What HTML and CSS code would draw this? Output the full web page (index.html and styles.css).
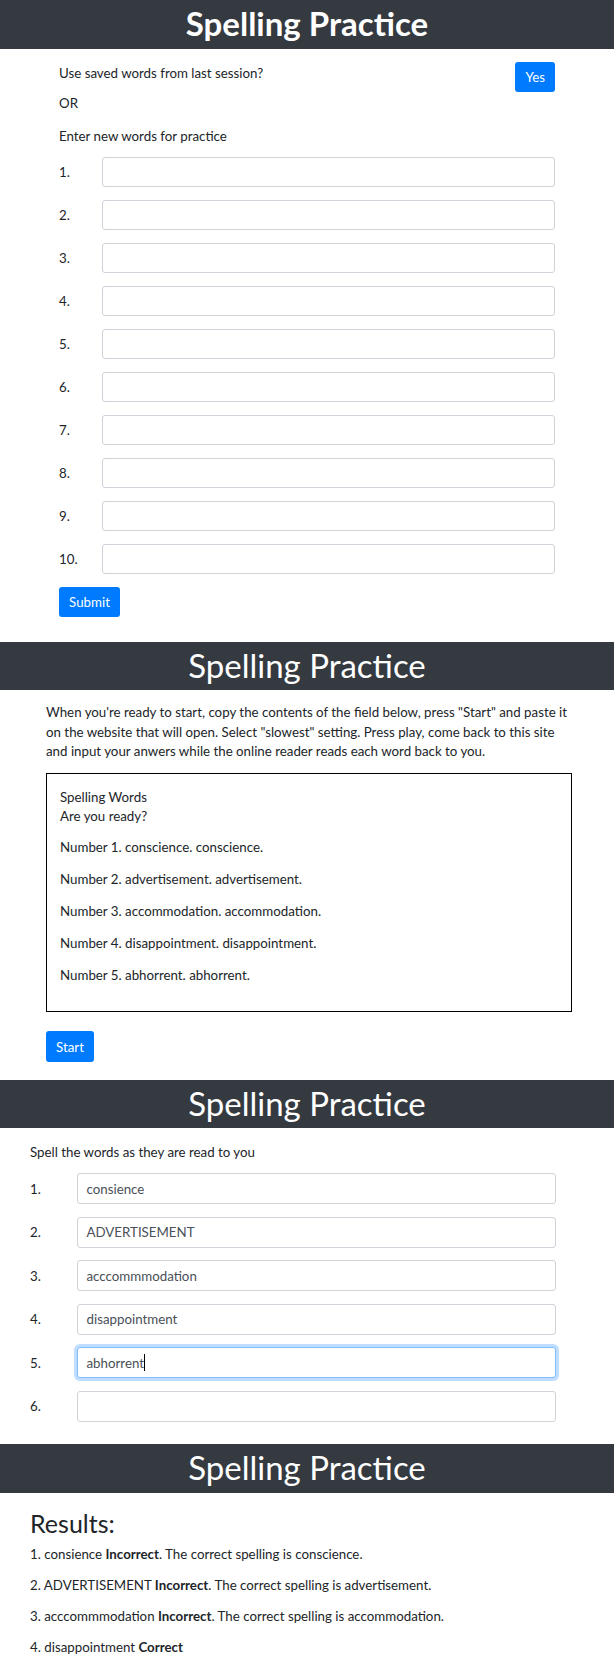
FILE: index.html
```html
<!DOCTYPE html>
<html lang="en">
<head>
<meta charset="utf-8">
<title>Spelling Practice</title>
<link rel="stylesheet" href="styles.css">
</head>
<body>
<section class="screen screen-setup">
  <header class="bar"><h1 class="bar-title bar-title-bold">Spelling Practice</h1></header>
  <div class="setup-body">
    <div class="saved-row">
      <span class="saved-text">Use saved words from last session?</span>
      <button class="btn">Yes</button>
    </div>
    <p class="setup-line">OR</p>
    <p class="setup-line setup-line-last">Enter new words for practice</p>
    <div class="word-list">
      <div class="word-row"><span class="word-num">1.</span><div class="field"></div></div>
      <div class="word-row"><span class="word-num">2.</span><div class="field"></div></div>
      <div class="word-row"><span class="word-num">3.</span><div class="field"></div></div>
      <div class="word-row"><span class="word-num">4.</span><div class="field"></div></div>
      <div class="word-row"><span class="word-num">5.</span><div class="field"></div></div>
      <div class="word-row"><span class="word-num">6.</span><div class="field"></div></div>
      <div class="word-row"><span class="word-num">7.</span><div class="field"></div></div>
      <div class="word-row"><span class="word-num">8.</span><div class="field"></div></div>
      <div class="word-row"><span class="word-num">9.</span><div class="field"></div></div>
      <div class="word-row"><span class="word-num">10.</span><div class="field"></div></div>
    </div>
    <button class="btn btn-submit">Submit</button>
  </div>
</section>

<section class="screen screen-reader">
  <header class="bar bar-48"><h1 class="bar-title">Spelling Practice</h1></header>
  <div class="reader-body">
    <p class="reader-intro">When you're ready to start, copy the contents of the field below, press "Start" and paste it<br>on the website that will open. Select "slowest" setting. Press play, come back to this site<br>and input your anwers while the online reader reads each word back to you.</p>
    <div class="reader-box">
      <p class="reader-head">Spelling Words<br>Are you ready?</p>
      <p class="reader-item">Number 1. conscience. conscience.</p>
      <p class="reader-item">Number 2. advertisement. advertisement.</p>
      <p class="reader-item">Number 3. accommodation. accommodation.</p>
      <p class="reader-item">Number 4. disappointment. disappointment.</p>
      <p class="reader-item">Number 5. abhorrent. abhorrent.</p>
    </div>
    <button class="btn btn-start">Start</button>
  </div>
</section>

<section class="screen screen-spell">
  <header class="bar bar-48"><h1 class="bar-title">Spelling Practice</h1></header>
  <div class="spell-body">
    <p class="spell-intro">Spell the words as they are read to you</p>
    <div class="spell-list">
      <div class="spell-row"><span class="spell-num">1.</span><div class="field field-tall">consience</div></div>
      <div class="spell-row"><span class="spell-num">2.</span><div class="field field-tall">ADVERTISEMENT</div></div>
      <div class="spell-row"><span class="spell-num">3.</span><div class="field field-tall">acccommmodation</div></div>
      <div class="spell-row"><span class="spell-num">4.</span><div class="field field-tall">disappointment</div></div>
      <div class="spell-row"><span class="spell-num">5.</span><div class="field field-tall field-focus">abhorrent<span class="caret"></span></div></div>
      <div class="spell-row"><span class="spell-num">6.</span><div class="field field-tall"></div></div>
    </div>
  </div>
</section>

<section class="screen screen-results">
  <header class="bar"><h1 class="bar-title">Spelling Practice</h1></header>
  <div class="results-body">
    <h2 class="results-title">Results:</h2>
    <p class="result-line">1. consience <b>Incorrect</b>. The correct spelling is conscience.</p>
    <p class="result-line">2. ADVERTISEMENT <b>Incorrect</b>. The correct spelling is advertisement.</p>
    <p class="result-line">3. acccommmodation <b>Incorrect</b>. The correct spelling is accommodation.</p>
    <p class="result-line">4. disappointment <b>Correct</b></p>
  </div>
</section>
</body>
</html>
```

FILE: styles.css
```css
* { box-sizing: border-box; }

html, body {
  margin: 0;
  padding: 0;
  background: #fff;
}

body {
  width: 614px;
  height: 1658px;
  overflow: hidden;
  font-family: "Lato", "Open Sans", sans-serif;
  font-size: 13.3px;
  color: #212529;
}

p { margin: 0; }

.bar {
  background: #343a40;
  height: 49px;
}
.bar-48 { height: 48px; }

.bar-title {
  margin: 0;
  color: #fff;
  text-align: center;
  font-size: 33px;
  font-weight: 400;
  line-height: 47px;
}
.bar-title-bold { font-weight: 700; }

.btn {
  display: block;
  border: 0;
  border-radius: 3px;
  background: #007bff;
  color: #fff;
  font-family: inherit;
  font-size: 13.3px;
  height: 30px;
  padding: 0 10px;
  line-height: 30px;
}

.field {
  flex: 1;
  height: 30px;
  border: 1px solid #ced4da;
  border-radius: 3px;
  background: #fff;
  color: #495057;
  padding: 0 9px;
  display: flex;
  align-items: center;
}

/* Screen 1 */
.setup-body {
  padding: 13px 59px 25px 59px;
}
.saved-row {
  display: flex;
  justify-content: space-between;
  align-items: flex-start;
  margin-bottom: 1px;
}
.saved-text {
  padding-top: 1px;
  line-height: 20px;
}
.setup-line {
  line-height: 20px;
  margin-bottom: 13px;
}
.setup-line-last { margin-bottom: 11px; }
.word-list {
  display: flex;
  flex-direction: column;
  gap: 13px;
}
.word-row {
  display: flex;
  align-items: center;
}
.word-num {
  width: 43px;
  flex: none;
}
.btn-submit {
  margin-top: 13px;
  width: 61px;
  padding: 0;
}

/* Screen 2 */
.reader-body {
  padding: 13px 42px 18px 46px;
}
.reader-intro {
  line-height: 19.5px;
  margin-bottom: 11.5px;
  white-space: nowrap;
}
.reader-box {
  border: 1.5px solid #000;
  height: 239px;
  padding: 14px 13px 0 13px;
}
.reader-head {
  line-height: 19px;
  margin-bottom: 12px;
}
.reader-item {
  line-height: 19px;
  margin-bottom: 13px;
}
.btn-start {
  margin-top: 19px;
  height: 31px;
  width: 48px;
  padding: 0;
}

/* Screen 3 */
.spell-body {
  padding: 14.5px 58px 22px 30px;
}
.spell-intro {
  line-height: 19px;
  margin-bottom: 11.5px;
}
.spell-list {
  display: flex;
  flex-direction: column;
  gap: 12.6px;
}
.spell-row {
  display: flex;
  align-items: center;
}
.spell-num {
  width: 46.5px;
  flex: none;
}
.field-tall {
  height: 31px;
}
.field-focus {
  border-color: #80bdff;
  box-shadow: 0 0 0 3px rgba(0, 123, 255, 0.25);
}
.caret {
  display: inline-block;
  width: 1px;
  height: 17px;
  background: #000;
  margin-left: 0;
}

/* Screen 4 */
.results-body {
  padding: 15px 30px 0 30px;
}
.results-title {
  margin: 0 0 7px 0;
  font-size: 25px;
  font-weight: 400;
  line-height: 30px;
}
.result-line {
  line-height: 19px;
  margin-bottom: 12px;
}
.result-line b { font-weight: 700; }
```
